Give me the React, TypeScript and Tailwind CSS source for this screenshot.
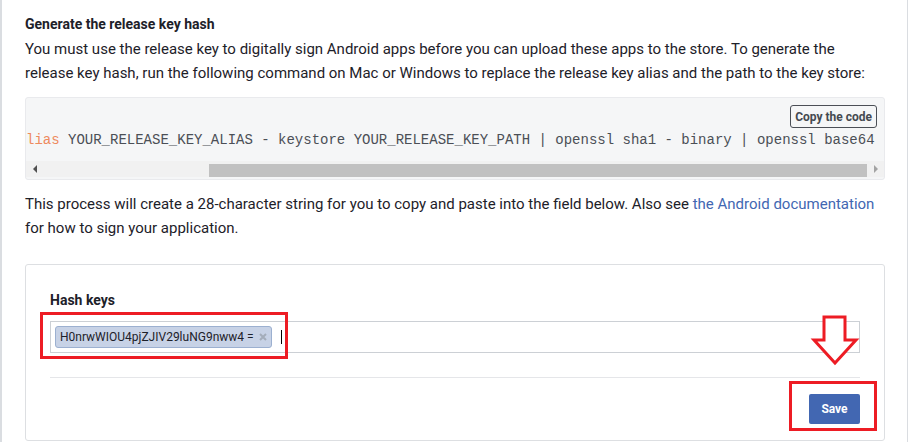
import React from "react";

export default function App() {
  return (
    <div className="relative h-[442px] w-[908px] border-l-2 border-r border-[#dadde1] bg-white pl-[23px] pr-[22px] pt-[14px] font-['Roboto',sans-serif] text-[15px] text-[#1d2129]">
      <h2 className="text-[14px] font-bold leading-5 text-[#1d2129]">Generate the release key hash</h2>
      <p className="mt-[3px] whitespace-nowrap leading-6">
        You must use the release key to digitally sign Android apps before you can upload these apps to the store. To generate the
        <br />
        release key hash, run the following command on Mac or Windows to replace the release key alias and the path to the key store:
      </p>

      {/* code block */}
      <div className="mt-3 overflow-hidden rounded-[3px] border border-[#e9eaed] bg-[#f5f6f7]">
        <div className="flex justify-end pr-[7px] pt-[7px]">
          <button className="h-[23px] rounded-[3px] border border-[#4b4f56] px-[4px] text-[12px] font-bold leading-none text-[#444950]">
            Copy the code
          </button>
        </div>
        <div className="mt-[2px] overflow-hidden whitespace-pre font-['Liberation_Mono',monospace] text-[14px] leading-5 text-[#4b4f56]">
          <span className="text-[#ee8a5e]">lias</span> YOUR_RELEASE_KEY_ALIAS - keystore YOUR_RELEASE_KEY_PATH | openssl sha1 - binary | openssl base64
        </div>
        <div className="mb-[2px] mt-[11px] flex h-[16px] items-center bg-[#f1f1f1]">
          <div className="flex w-[17px] items-center justify-center">
            <span className="h-0 w-0 border-y-[4px] border-r-[4px] border-y-transparent border-r-[#505050]" />
          </div>
          <div className="ml-[166px] h-[13px] w-[658px] self-end bg-[#c1c1c1]" />
          <div className="flex flex-1 items-center justify-center">
            <span className="h-0 w-0 border-y-[4px] border-l-[4px] border-y-transparent border-l-[#a3a3a3]" />
          </div>
        </div>
      </div>

      <p className="mt-3 whitespace-nowrap leading-6">
        This process will create a 28-character string for you to copy and paste into the field below. Also see{" "}
        <a className="text-[#4267b2]">the Android documentation</a>
        <br />
        for how to sign your application.
      </p>

      {/* hash keys card */}
      <div className="mt-6 rounded-[3px] border border-[#dddfe2] px-6 pb-4 pt-[25px]">
        <label className="block text-[14px] font-bold leading-5 text-[#1d2129]">Hash keys</label>
        <div className="relative mt-[11px] flex h-[32px] items-center border border-[#ccd0d5] px-[4px]">
          <span className="flex h-[22px] items-center gap-[5px] rounded-[3px] border border-[#9cb0d0] bg-[#c7d2e6] pl-[4px] pr-[4px] text-[12px] text-[#1d2129]">
            H0nrwWIOU4pjZJIV29luNG9nww4 =
            <svg width="8" height="8" viewBox="0 0 8 8">
              <path d="M1 1 L7 7 M7 1 L1 7" stroke="#a4adba" strokeWidth="2" />
            </svg>
          </span>
          <span className="ml-[9px] h-[14px] w-px bg-black" />
          <div className="absolute left-[-11px] top-[-10px] h-[47px] w-[248px] border-[3px] border-[#ed1c24]" />
        </div>
        <div className="mt-6 h-px bg-[#e5e6e9]" />
        <div className="mt-4 flex justify-end">
          <div className="relative">
            <button className="h-[30px] w-[51px] rounded-[2px] bg-[#4267b2] text-[12px] font-bold text-white">Save</button>
            <div className="absolute left-[-20px] top-[-13px] h-[50px] w-[88px] border-[3px] border-[#ed1c24]" />
          </div>
        </div>
      </div>

      {/* annotation arrow */}
      <svg className="absolute left-[808px] top-[314px]" width="52" height="54" viewBox="0 0 52 54">
        <polygon
          points="14,3 35,3 35,26 46,26 25,49 4,26 14,26"
          fill="white"
          stroke="#ed1c24"
          strokeWidth="3"
          strokeLinejoin="miter"
        />
      </svg>
    </div>
  );
}
